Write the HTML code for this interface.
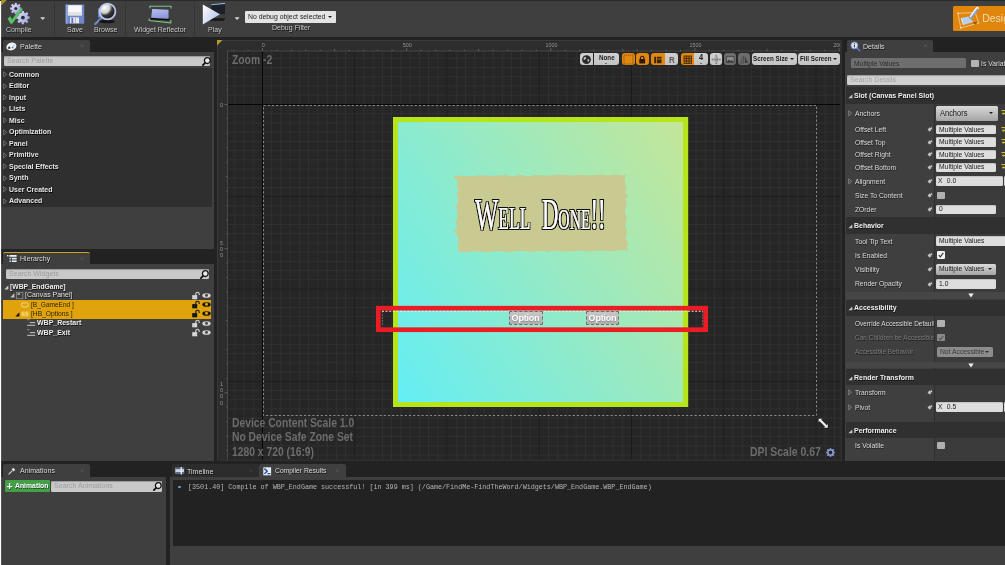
<!DOCTYPE html>
<html>
<head>
<meta charset="utf-8">
<title>WBP_EndGame</title>
<style>
html,body{margin:0;padding:0;}
body{width:1005px;height:565px;overflow:hidden;background:#222222;position:relative;font-family:"Liberation Sans",sans-serif;font-size:8px;color:#d8d8d8;}
.abs{position:absolute;}
.t{position:absolute;white-space:nowrap;line-height:10px;}
.b{font-weight:bold;}
.sh{text-shadow:0.5px 0.5px 0 #000;}
/* top toolbar */
#toolbar{left:1px;top:0;width:1004px;height:37px;background:#3f3f3f;}
.tsep{position:absolute;top:2px;height:33.500px;width:1px;background:#343434;}
.tlabel{position:absolute;top:24.800px;font-size:7.800px;line-height:10px;color:#cacaca;white-space:nowrap;text-shadow:0.600px 0.600px 0 #111;transform:scaleX(0.900);transform-origin:0 0;}
/* tabs */
.tab{position:absolute;height:13px;background:#3f3f3f;border-radius:2px 2px 0 0;}
.tab .lbl{position:absolute;top:2.4px;transform:scaleX(0.93);transform-origin:0 0;font-size:7.6px;line-height:10px;color:#dcdcdc;white-space:nowrap;text-shadow:0.5px 0.5px 0 #111;}
.tab .x{position:absolute;top:2px;font-size:7px;line-height:10px;color:#5a5a5a;}
.panel{position:absolute;background:#3f3f3f;}
.search{position:absolute;height:10px;background:#c9c9c9;border-radius:1.5px;box-shadow:inset 0 1px 1px #9a9a9a;}
.search span{position:absolute;left:3px;top:0.3px;transform:scaleX(0.93);transform-origin:0 0;font-size:7.6px;line-height:10px;color:#9c9c9c;white-space:nowrap;}
.pal{position:absolute;left:9px;transform:scaleX(0.92);transform-origin:0 0;margin-top:0.5px;font-size:7.6px;font-weight:bold;line-height:10px;color:#e6e6e6;white-space:nowrap;text-shadow:0.5px 0.5px 0 #000;}
.tri{position:absolute;left:3.5px;width:0;height:0;}
.optbtn{position:absolute;height:13.6px;box-sizing:border-box;border:0.8px dashed #6e6e6e;background:linear-gradient(#c6c6c6,#b0b0b0);color:#fff;font-weight:bold;font-size:9px;line-height:12px;text-align:center;letter-spacing:-0.2px;border-radius:1px;text-shadow:0 0.5px 1px rgba(0,0,0,0.25);}
.ovt{position:absolute;white-space:nowrap;font-weight:bold;font-size:12px;line-height:20px;color:#6c6c6c;transform:scaleX(0.86);transform-origin:0 0;}
.vb{position:absolute;top:12.500px;height:12.800px;overflow:hidden;}
.vb.lg{background:linear-gradient(#d0d0d0,#c4c4c4);}
.vb.or{background:#e0880f;}
.vb.dg{background:#6c6c6c;}
.vb.rl{border-top-left-radius:3px;border-bottom-left-radius:3px;}
.vb.rr{border-top-right-radius:3px;border-bottom-right-radius:3px;}
.vt{position:absolute;white-space:nowrap;font-weight:bold;font-size:8px;line-height:10px;color:#1c1c1c;transform:scaleX(0.780);transform-origin:0 0;}
.dn{position:absolute;width:0;height:0;border-left:1.300px solid transparent;border-right:1.300px solid transparent;border-top:1.600px solid #1c1c1c;}
.dn.big{border-left-width:2.200px;border-right-width:2.200px;border-top-width:2.600px;}
.ht{position:absolute;white-space:nowrap;font-size:7.600px;line-height:10px;transform:scaleX(0.920);transform-origin:0 0;text-shadow:0.500px 0.500px 0 #111;}
.dt{position:absolute;margin-top:0.800px;white-space:nowrap;font-size:7.500px;line-height:10px;color:#dcdcdc;transform:scaleX(0.900);transform-origin:0 0;text-shadow:0.500px 0.500px 0 #1a1a1a;}
.dh{position:absolute;margin-top:0.800px;white-space:nowrap;font-size:8px;font-weight:bold;line-height:10px;color:#f0f0f0;transform:scaleX(0.870);transform-origin:0 0;text-shadow:0.500px 0.500px 0 #111;}
.fld{position:absolute;background:#dedede;border-radius:1.500px;box-shadow:inset 0 0.600px 0.800px #a8a8a8;overflow:hidden;}
.ft{position:absolute;top:-0.200px;white-space:nowrap;font-size:7.500px;line-height:10px;color:#1a1a1a;transform:scaleX(0.900);transform-origin:0 0;}
.cb{position:absolute;width:8px;height:7.800px;border-radius:1px;}
.combo{position:absolute;background:linear-gradient(#dadada,#a4a4a4);border-radius:1.500px;overflow:hidden;}
</style>
</head>
<body>
<div id="root" style="position:absolute;left:0;top:0;width:1005px;height:565px;will-change:transform;">
<!-- TOOLBAR -->
<div id="toolbar" class="abs">
<div class="abs" style="left:0;top:0;width:1004px;height:1px;background:#2a2a2a"></div>
<div class="tsep" style="left:53px"></div><div class="tsep" style="left:124px"></div><div class="tsep" style="left:192.5px"></div>
<svg class="abs" style="left:-1px;top:0" width="345" height="37" viewBox="0 0 345 37">
<defs><linearGradient id="gg" x1="0" y1="0" x2="1" y2="1"><stop offset="0" stop-color="#dfe2fa"/><stop offset="1" stop-color="#9aa0d8"/></linearGradient><radialGradient id="lens" cx="0.3" cy="0.25" r="0.9"><stop offset="0" stop-color="#ffffff"/><stop offset="0.380" stop-color="#cfcfcf"/><stop offset="0.560" stop-color="#343434"/><stop offset="1" stop-color="#141414"/></radialGradient><linearGradient id="pl" x1="0" y1="0" x2="1" y2="0.600"><stop offset="0" stop-color="#ffffff"/><stop offset="1" stop-color="#b8c4e8"/></linearGradient><linearGradient id="wr" x1="0" y1="0" x2="0.300" y2="1"><stop offset="0" stop-color="#b8c0f0"/><stop offset="1" stop-color="#8c98d8"/></linearGradient></defs>
<path d="M1.200 0H6.800L1.200 5.600Z" fill="#b0902a"/>
<path d="M21.51 7.60L21.51 9.60L19.96 9.67L19.50 10.79L20.55 11.94L19.14 13.35L17.99 12.30L16.87 12.76L16.80 14.31L14.80 14.31L14.73 12.76L13.61 12.30L12.46 13.35L11.05 11.94L12.10 10.79L11.64 9.67L10.09 9.60L10.09 7.60L11.64 7.53L12.10 6.41L11.05 5.26L12.46 3.85L13.61 4.90L14.73 4.44L14.80 2.89L16.80 2.89L16.87 4.44L17.99 4.90L19.14 3.85L20.55 5.26L19.50 6.41L19.96 7.53Z" fill="url(#gg)"/><circle cx="15.8" cy="8.6" r="1.5" fill="#2c2c34"/><path d="M29.60 16.43L29.60 18.77L27.74 18.84L27.20 20.15L28.46 21.51L26.81 23.16L25.45 21.90L24.14 22.44L24.07 24.30L21.73 24.30L21.66 22.44L20.35 21.90L18.99 23.16L17.34 21.51L18.60 20.15L18.06 18.84L16.20 18.77L16.20 16.43L18.06 16.36L18.60 15.05L17.34 13.69L18.99 12.04L20.35 13.30L21.66 12.76L21.73 10.90L24.07 10.90L24.14 12.76L25.45 13.30L26.81 12.04L28.46 13.69L27.20 15.05L27.74 16.36Z" fill="url(#gg)"/><circle cx="22.9" cy="17.6" r="1.9" fill="#2c2c34"/>
<path d="M7.600 18.700L10.200 16.300L12 19.400L20.700 8.200L23 9.300L12.200 23.800L10.600 23.800Z" fill="#5cc466" stroke="#3c8a44" stroke-width="0.300"/>
<path d="M40.200 17.200H45.200L42.700 19.900Z" fill="#d8d8d8"/><path d="M234.600 17.200H239.600L237.100 19.900Z" fill="#d8d8d8"/>
<rect x="65.700" y="4.500" width="18.500" height="19.200" rx="0.600" fill="#6f88cc"/><rect x="65.700" y="4.500" width="1.600" height="19.200" fill="#93a6dc"/><rect x="67.900" y="5.200" width="13.900" height="10.200" fill="#f8f8f8"/><rect x="67.900" y="12" width="13.900" height="3.400" fill="#e4e4e4"/><rect x="70" y="17.400" width="9" height="5.800" fill="#e8e8e8"/><rect x="71.400" y="18" width="1.800" height="5" fill="#5a74c0"/><rect x="75" y="18" width="0.800" height="5.200" fill="#b0b0b0"/>
<path d="M98 8.500H104V17.500H98Z" fill="#6f88cc"/><path d="M101.200 18.200L95.200 24" stroke="#7088cc" stroke-width="2.200" stroke-linecap="round"/><ellipse cx="107" cy="21.500" rx="8" ry="1.800" fill="#151515"/><circle cx="107.500" cy="11.500" r="7.900" fill="url(#lens)" stroke="#b8c8ee" stroke-width="1.800"/>
<path d="M150.500 19.400L168.500 20.200L171 18.300L168 19L150.500 18Z" fill="#0a0a0a"/><path d="M151.200 17.800L152.200 9L168.500 9.800L168.500 18.800Z" fill="url(#wr)"/><path d="M152.200 9L166.500 9.800L168.500 9.800" fill="none"/><path d="M149.900 8.300V6.300H171V8.600" fill="none" stroke="#7cc48c" stroke-width="1.100"/><path d="M149.200 18.400V20.600L170.800 22.900V20" fill="none" stroke="#7cc48c" stroke-width="1.100"/>
<path d="M211.200 4.200L225 2.800V14.200L211.200 14.200Z" fill="#1c2028"/><path d="M211.200 4.200L225 2.800V3.900L211.200 5.300Z" fill="#8cb4d8"/><path d="M209.500 18.200H225.200L224 20.800H209.500Z" fill="#161616"/><path d="M202.800 4.600L220 14.200L202.800 24.400Z" fill="url(#pl)"/>
</svg>
<div class="tlabel" style="left:4.600px">Compile</div>
<div class="tlabel" style="left:66.400px">Save</div>
<div class="tlabel" style="left:92.600px">Browse</div>
<div class="tlabel" style="left:133px">Widget Reflector</div>
<div class="tlabel" style="left:207px">Play</div>
<div class="tlabel" style="left:271px;top:23px">Debug Filter</div>
<div class="abs" style="left:244px;top:10.500px;width:91.300px;height:12.200px;background:#e4e4e4;border-radius:1px"><span class="ft" style="left:3.400px;top:1.400px;font-size:7.800px;transform:scaleX(0.880)">No debug object selected</span><i class="dn big" style="left:82.500px;top:5.400px"></i></div>
<div class="abs" style="left:952px;top:6px;width:60px;height:25px;background:#e0860c;border-radius:1.500px"><svg class="abs" style="left:0;top:0" width="30" height="25" viewBox="953 6 30 25"><path d="M958 13.400L975.300 12.400L978.500 23L960.800 28Z" fill="none" stroke="#f2dcb4" stroke-width="0.700"/><path d="M957.200 12.800h1.600M958 12.400v1.600M977.700 23h1.600M960 28h1.600M960.800 27.200v1.600" stroke="#f8ead0" stroke-width="0.600"/><path d="M972 22.500L977.500 21.500L976 25Z" fill="#8a5208" opacity="0.800"/><path d="M960.800 18L968.300 16.600L973.600 21.900L963 25.100Z" fill="#b4d0ee"/><path d="M960.800 18L963 25.100L963.800 24.900L961.700 18.300Z" fill="#e8f2fc"/><path d="M975.900 7.600L978.600 9.200L972 18.400L969.500 18.800L969.600 16.400Z" fill="#7aa0e0"/><path d="M975.900 7.600L977.200 8.400L970.600 17.600L969.600 16.400Z" fill="#f4f8ff"/><path d="M975.900 7.600a1.500 1.500 0 0 1 2.700 1.600Z" fill="#ffffff"/></svg><span class="t" style="left:29.200px;top:5.400px;font-size:10.500px;line-height:14px;color:#f2dcb4">Designer</span></div>
</div>
<!-- LEFT: PALETTE -->
<div class="tab" style="left:3px;top:40px;width:87px;height:12px"><svg class="abs" style="left:3.400px;top:1.600px" width="11" height="9" viewBox="0 0 11 9"><path d="M0.400 5.600C0.400 2.600 3 0.400 6.200 0.400C8.800 0.400 10.400 1.800 10.400 3.800C10.400 6.400 7.800 8.400 4.400 8.400C1.800 8.400 0.400 7.400 0.400 5.600Z" fill="#f4f4f8"/><circle cx="3.200" cy="5.800" r="1.200" fill="#3f3f3f"/><circle cx="6.600" cy="5.600" r="1" fill="#4a90e0"/><circle cx="8.300" cy="3.600" r="0.800" fill="#90c0f0"/></svg><span class="lbl" style="left:17px;top:1.600px">Palette</span><span class="x" style="left:77px;top:1px">×</span></div>
<div class="panel" style="left:1.300px;top:52px;width:212.400px;height:196.700px"></div>
<div class="abs" style="left:1.300px;top:67.800px;width:210.700px;height:138.900px;background:#2f2f2f"></div>
<div class="search" style="left:4.400px;top:56px;width:206.100px"><span>Search Palette</span></div>

<svg class="abs" style="left:3px;top:71.0px" width="5" height="7" viewBox="0 0 5 7"><path d="M0.700 0.800L3.600 3.300L0.700 5.800Z" fill="none" stroke="#8a8a8a" stroke-width="0.700"/></svg><div class="pal" style="top:69.0px">Common</div>
<svg class="abs" style="left:3px;top:82.5px" width="5" height="7" viewBox="0 0 5 7"><path d="M0.700 0.800L3.600 3.300L0.700 5.800Z" fill="none" stroke="#8a8a8a" stroke-width="0.700"/></svg><div class="pal" style="top:80.5px">Editor</div>
<svg class="abs" style="left:3px;top:94.0px" width="5" height="7" viewBox="0 0 5 7"><path d="M0.700 0.800L3.600 3.300L0.700 5.800Z" fill="none" stroke="#8a8a8a" stroke-width="0.700"/></svg><div class="pal" style="top:92.0px">Input</div>
<svg class="abs" style="left:3px;top:105.6px" width="5" height="7" viewBox="0 0 5 7"><path d="M0.700 0.800L3.600 3.300L0.700 5.800Z" fill="none" stroke="#8a8a8a" stroke-width="0.700"/></svg><div class="pal" style="top:103.6px">Lists</div>
<svg class="abs" style="left:3px;top:117.1px" width="5" height="7" viewBox="0 0 5 7"><path d="M0.700 0.800L3.600 3.300L0.700 5.800Z" fill="none" stroke="#8a8a8a" stroke-width="0.700"/></svg><div class="pal" style="top:115.1px">Misc</div>
<svg class="abs" style="left:3px;top:128.6px" width="5" height="7" viewBox="0 0 5 7"><path d="M0.700 0.800L3.600 3.300L0.700 5.800Z" fill="none" stroke="#8a8a8a" stroke-width="0.700"/></svg><div class="pal" style="top:126.6px">Optimization</div>
<svg class="abs" style="left:3px;top:140.1px" width="5" height="7" viewBox="0 0 5 7"><path d="M0.700 0.800L3.600 3.300L0.700 5.800Z" fill="none" stroke="#8a8a8a" stroke-width="0.700"/></svg><div class="pal" style="top:138.1px">Panel</div>
<svg class="abs" style="left:3px;top:151.6px" width="5" height="7" viewBox="0 0 5 7"><path d="M0.700 0.800L3.600 3.300L0.700 5.800Z" fill="none" stroke="#8a8a8a" stroke-width="0.700"/></svg><div class="pal" style="top:149.6px">Primitive</div>
<svg class="abs" style="left:3px;top:163.2px" width="5" height="7" viewBox="0 0 5 7"><path d="M0.700 0.800L3.600 3.300L0.700 5.800Z" fill="none" stroke="#8a8a8a" stroke-width="0.700"/></svg><div class="pal" style="top:161.2px">Special Effects</div>
<svg class="abs" style="left:3px;top:174.7px" width="5" height="7" viewBox="0 0 5 7"><path d="M0.700 0.800L3.600 3.300L0.700 5.800Z" fill="none" stroke="#8a8a8a" stroke-width="0.700"/></svg><div class="pal" style="top:172.7px">Synth</div>
<svg class="abs" style="left:3px;top:186.2px" width="5" height="7" viewBox="0 0 5 7"><path d="M0.700 0.800L3.600 3.300L0.700 5.800Z" fill="none" stroke="#8a8a8a" stroke-width="0.700"/></svg><div class="pal" style="top:184.2px">User Created</div>
<svg class="abs" style="left:3px;top:197.7px" width="5" height="7" viewBox="0 0 5 7"><path d="M0.700 0.800L3.600 3.300L0.700 5.800Z" fill="none" stroke="#8a8a8a" stroke-width="0.700"/></svg><div class="pal" style="top:195.7px">Advanced</div>

<!-- LEFT: HIERARCHY -->
<div class="tab" style="left:3px;top:251.700px;width:87px;height:12.300px;border-top:0.900px solid #c9a227;box-sizing:border-box"><svg class="abs" style="left:3.500px;top:2px" width="10" height="8" viewBox="0 0 10 8"><rect x="0" y="0" width="1.400" height="1.400" fill="#e8eef4"/><rect x="2.400" y="0" width="7.200" height="1.800" fill="#e8eef4"/><rect x="2.400" y="2.800" width="1.600" height="1.600" fill="#a8c8d8"/><rect x="4.800" y="2.800" width="4.800" height="1.600" fill="#e8eef4"/><rect x="2.400" y="5.400" width="1.600" height="1.600" fill="#a8c8d8"/><rect x="4.800" y="5.400" width="4.800" height="1.600" fill="#e8eef4"/></svg><span class="lbl" style="left:17px;top:1.500px">Hierarchy</span><span class="x" style="left:77px;top:1px">×</span></div>
<div class="panel" style="left:1.300px;top:264px;width:212.400px;height:196.800px"></div>
<div class="search" style="left:5.700px;top:269.200px;width:203.600px"><span>Search Widgets</span></div>
<div class="abs" style="left:3px;top:300.200px;width:208.300px;height:18.600px;background:#e0a30c"></div>
<svg class="abs" style="left:4px;top:284.7px" width="5" height="5" viewBox="0 0 5 5"><path d="M4.400 0.300V4.400H0.300Z" fill="#c8c8c8"/></svg><div class="ht b" style="left:10px;top:281.800px;color:#f0f0f0;transform:scaleX(0.890)">[WBP_EndGame]</div>
<svg class="abs" style="left:9.5px;top:293.3px" width="5" height="5" viewBox="0 0 5 5"><path d="M4.400 0.300V4.400H0.300Z" fill="#c8c8c8"/></svg><svg class="abs" style="left:15.800px;top:292px" width="8" height="8" viewBox="0 0 8 8"><rect x="0.500" y="0.500" width="6.400" height="6.200" fill="none" stroke="#8c8c8c" stroke-width="0.800"/><rect x="1.600" y="1.400" width="2.400" height="1.400" fill="#b8c8e0"/></svg><div class="ht" style="left:25px;top:290.400px;color:#e0e0e0">[Canvas Panel]</div>
<svg class="abs" style="left:21.300px;top:301.800px" width="8" height="6" viewBox="0 0 8 6"><rect x="0.600" y="0.800" width="6.600" height="4.200" rx="1.400" fill="none" stroke="#f4dc9a" stroke-width="0.900"/></svg><div class="ht" style="left:31.300px;top:299.500px;color:#2c2208;text-shadow:none;transform:scaleX(0.860)">[B_GameEnd ]</div>
<svg class="abs" style="left:15.2px;top:311.6px" width="5" height="5" viewBox="0 0 5 5"><path d="M4.400 0.300V4.400H0.300Z" fill="#141414"/></svg><svg class="abs" style="left:21.300px;top:310.800px" width="8" height="6" viewBox="0 0 8 6"><rect x="0.400" y="0.600" width="3.300" height="4.800" fill="#f0c860"/><rect x="4.200" y="0.600" width="3.300" height="4.800" fill="#f0c860"/></svg><div class="ht" style="left:31.300px;top:308.700px;color:#2c2208;text-shadow:none;transform:scaleX(0.880)">[HB_Options ]</div>
<svg class="abs" style="left:26.800px;top:319.3px" width="9" height="8" viewBox="0 0 9 8"><rect x="0.200" y="0.300" width="2.400" height="0.900" fill="#9a9a9a"/><rect x="2.800" y="3.200" width="5.400" height="0.900" fill="#d8d8d8"/><rect x="0.200" y="5.800" width="8" height="0.900" fill="#d8d8d8"/></svg><div class="ht b" style="left:37px;top:318.3px;color:#f0f0f0">WBP_Restart</div>
<svg class="abs" style="left:26.800px;top:328.5px" width="9" height="8" viewBox="0 0 9 8"><rect x="0.200" y="0.300" width="2.400" height="0.900" fill="#9a9a9a"/><rect x="2.800" y="3.200" width="5.400" height="0.900" fill="#d8d8d8"/><rect x="0.200" y="5.800" width="8" height="0.900" fill="#d8d8d8"/></svg><div class="ht b" style="left:37px;top:327.5px;color:#f0f0f0">WBP_Exit</div>
<svg class="abs" style="left:191.500px;top:291.1px" width="9" height="9" viewBox="0 0 9 9"><rect x="0.200" y="4.100" width="5" height="4.200" fill="#d4d4d4"/><path d="M3.800 4.500V2.900a1.700 1.700 0 0 1 3.400 0V4.100" fill="none" stroke="#d4d4d4" stroke-width="1.100"/></svg><svg class="abs" style="left:201.500px;top:292.1px" width="9" height="7" viewBox="0 0 9 7"><ellipse cx="4.500" cy="3.500" rx="4.200" ry="2.300" fill="#d4d4d4"/><circle cx="4.500" cy="3.300" r="1.500" fill="#4a4a4a"/></svg>
<svg class="abs" style="left:191.500px;top:300.2px" width="9" height="9" viewBox="0 0 9 9"><rect x="0.200" y="4.100" width="5" height="4.200" fill="#161616"/><path d="M3.800 4.500V2.900a1.700 1.700 0 0 1 3.400 0V4.100" fill="none" stroke="#161616" stroke-width="1.100"/></svg><svg class="abs" style="left:201.500px;top:301.2px" width="9" height="7" viewBox="0 0 9 7"><ellipse cx="4.500" cy="3.500" rx="4.200" ry="2.300" fill="#161616"/><circle cx="4.500" cy="3.300" r="1.500" fill="#e0a30c"/></svg>
<svg class="abs" style="left:191.500px;top:309.4px" width="9" height="9" viewBox="0 0 9 9"><rect x="0.200" y="4.100" width="5" height="4.200" fill="#161616"/><path d="M3.800 4.500V2.900a1.700 1.700 0 0 1 3.400 0V4.100" fill="none" stroke="#161616" stroke-width="1.100"/></svg><svg class="abs" style="left:201.500px;top:310.4px" width="9" height="7" viewBox="0 0 9 7"><ellipse cx="4.500" cy="3.500" rx="4.200" ry="2.300" fill="#161616"/><circle cx="4.500" cy="3.300" r="1.500" fill="#e0a30c"/></svg>
<svg class="abs" style="left:191.500px;top:318.6px" width="9" height="9" viewBox="0 0 9 9"><rect x="0.200" y="4.100" width="5" height="4.200" fill="#d4d4d4"/><path d="M3.800 4.500V2.900a1.700 1.700 0 0 1 3.400 0V4.100" fill="none" stroke="#d4d4d4" stroke-width="1.100"/></svg><svg class="abs" style="left:201.500px;top:319.6px" width="9" height="7" viewBox="0 0 9 7"><ellipse cx="4.500" cy="3.500" rx="4.200" ry="2.300" fill="#d4d4d4"/><circle cx="4.500" cy="3.300" r="1.500" fill="#4a4a4a"/></svg>
<svg class="abs" style="left:191.500px;top:327.8px" width="9" height="9" viewBox="0 0 9 9"><rect x="0.200" y="4.100" width="5" height="4.200" fill="#d4d4d4"/><path d="M3.800 4.500V2.900a1.700 1.700 0 0 1 3.400 0V4.100" fill="none" stroke="#d4d4d4" stroke-width="1.100"/></svg><svg class="abs" style="left:201.500px;top:328.8px" width="9" height="7" viewBox="0 0 9 7"><ellipse cx="4.500" cy="3.500" rx="4.200" ry="2.300" fill="#d4d4d4"/><circle cx="4.500" cy="3.300" r="1.500" fill="#4a4a4a"/></svg>
<svg class="abs" style="left:200.2px;top:269.7px" width="9" height="9" viewBox="0 0 9 9"><circle cx="5.300" cy="3.600" r="2.900" fill="#e6e6e6" stroke="#111" stroke-width="1.300"/><path d="M3.100 5.900L0.900 8.100" stroke="#111" stroke-width="1.800" stroke-linecap="round"/></svg><svg class="abs" style="left:201.8px;top:56.5px" width="9" height="9" viewBox="0 0 9 9"><circle cx="5.300" cy="3.600" r="2.900" fill="#e6e6e6" stroke="#111" stroke-width="1.300"/><path d="M3.100 5.900L0.900 8.100" stroke="#111" stroke-width="1.800" stroke-linecap="round"/></svg>

<!-- DESIGNER -->
<div id="designer" class="abs" style="left:217px;top:40px;width:625px;height:420.800px;background:#2d2d2d;overflow:hidden">
<svg class="abs" style="left:0;top:0" width="625" height="421" viewBox="0 0 625 421">
<defs>
<pattern id="gmin" x="45" y="64" width="9.226" height="9.226" patternUnits="userSpaceOnUse"><path d="M0.5 0V9.226M0 0.5H9.226" stroke="#303030" stroke-width="1" fill="none"/></pattern>
<pattern id="gmaj" x="45" y="64" width="92.256" height="92.256" patternUnits="userSpaceOnUse"><path d="M0.5 0V92.256M0 0.5H92.256" stroke="#1a1a1a" stroke-width="1" fill="none"/></pattern>
</defs>
<rect x="0" y="0" width="626" height="1" fill="#3a3a3a"/>
<rect x="0" y="0" width="1" height="422" fill="#3a3a3a"/>
<rect x="10" y="10.500" width="616" height="412" fill="#262626"/>
<rect x="10" y="10.500" width="616" height="412" fill="url(#gmin)"/>
<rect x="10" y="10.500" width="616" height="412" fill="url(#gmaj)"/>
<path d="M45.500 10.500V422M10 64.500H626" stroke="#060606" stroke-width="1"/>
<path d="M10 11H626M10.500 10.500V422" stroke="#484848" stroke-width="1" fill="none"/>
<path d="M16.7 9.7V11M31.1 9.7V11M45.5 8.0V11M59.9 9.7V11M74.3 9.7V11M88.7 9.7V11M103.2 9.7V11M117.6 8.8V11M132.0 9.7V11M146.4 9.7V11M160.8 9.7V11M175.2 9.7V11M189.7 8.0V11M204.1 9.7V11M218.5 9.7V11M232.9 9.7V11M247.3 9.7V11M261.7 8.8V11M276.1 9.7V11M290.6 9.7V11M305.0 9.7V11M319.4 9.7V11M333.8 8.0V11M348.2 9.7V11M362.6 9.7V11M377.0 9.7V11M391.5 9.7V11M405.9 8.8V11M420.3 9.7V11M434.7 9.7V11M449.1 9.7V11M463.5 9.7V11M477.9 8.0V11M492.4 9.7V11M506.8 9.7V11M521.2 9.7V11M535.6 9.7V11M550.0 8.8V11M564.4 9.7V11M578.9 9.7V11M593.3 9.7V11M607.7 9.7V11M622.1 8.0V11M9.4 21.3H10.500M9.4 35.7H10.500M9.4 50.1H10.500M7.5 64.5H10.500M9.4 78.9H10.500M9.4 93.3H10.500M9.4 107.7H10.500M9.4 122.2H10.500M8.7 136.6H10.500M9.4 151.0H10.500M9.4 165.4H10.500M9.4 179.8H10.500M9.4 194.2H10.500M7.5 208.7H10.500M9.4 223.1H10.500M9.4 237.5H10.500M9.4 251.9H10.500M9.4 266.3H10.500M8.7 280.7H10.500M9.4 295.1H10.500M9.4 309.6H10.500M9.4 324.0H10.500M9.4 338.4H10.500M7.5 352.8H10.500M9.4 367.2H10.500M9.4 381.6H10.500M9.4 396.0H10.500M9.4 410.5H10.500" stroke="#6a6a6a" stroke-width="0.800" fill="none"/>
<g font-family="Liberation Sans, sans-serif" font-size="5.400" fill="#949494"><text x="46.2" y="6.600" text-anchor="middle">0</text><text x="190.3" y="6.600" text-anchor="middle">500</text><text x="334.5" y="6.600" text-anchor="middle">1000</text><text x="478.6" y="6.600" text-anchor="middle">1500</text><text x="622.300" y="6.600" text-anchor="middle">2000</text><text x="4.6" y="66.9" text-anchor="middle">0</text><text x="4.6" y="204.9" text-anchor="middle">5</text><text x="4.6" y="211.1" text-anchor="middle">0</text><text x="4.6" y="217.2" text-anchor="middle">0</text><text x="4.6" y="345.9" text-anchor="middle">1</text><text x="4.6" y="352.1" text-anchor="middle">0</text><text x="4.6" y="358.3" text-anchor="middle">0</text><text x="4.6" y="364.5" text-anchor="middle">0</text></g>
<path d="M0 0H5.600L0 5.600Z" fill="#b89a28"/>
<rect x="46.500" y="65.500" width="553" height="310" fill="none" stroke="#a4a4a4" stroke-width="0.800" stroke-dasharray="2.200 2"/>
<rect x="623.300" y="0" width="2" height="422" fill="#303030"/><rect x="0" y="419.600" width="626" height="2" fill="#303030"/>
</svg>
<svg class="abs" style="left:0;top:0" width="625" height="421" viewBox="217 40 625 421">
<defs>
<linearGradient id="bgg" x1="0" y1="1" x2="1.173" y2="0.281"><stop offset="0" stop-color="#64eef4"/><stop offset="1" stop-color="#c4e698"/></linearGradient>
<filter id="outl" x="-5%" y="-10%" width="110%" height="125%"><feMorphology in="SourceAlpha" operator="dilate" radius="0.9" result="d"/><feFlood flood-color="#101010"/><feComposite in2="d" operator="in" result="o"/><feMerge><feMergeNode in="o"/><feMergeNode in="SourceGraphic"/></feMerge></filter>
</defs>
<rect x="393" y="117" width="295.2" height="290" fill="#b6e61a"/>
<rect x="398" y="122" width="285" height="280" fill="url(#bgg)"/>
<path d="M453 176.5 L460 175.6 L470 176.2 L480 175.2 L492 176 L503 175 L512 176.2 L521 174.8 L528 176.4 L536 175 L548 175.8 L560 174.6 L571 175.6 L580 174.8 L590 175.4 L600 174.4 L608 175.6 L615 174.6 L622 175.4 L625.5 174.6 L624.5 181 L626.5 188 L625 192 L628.2 196 L625.4 199 L626.6 204 L624.6 211 L626.8 218 L625 226 L627 232 L625.6 238 L628.4 244 L626.4 246.5 L628.2 250.6 L620 250 L611 251.4 L600 250.4 L588 251.6 L577 250.6 L566 251.8 L553 250.6 L549 252.2 L545 250.8 L532 251.8 L520 250.8 L508 252 L497 251 L486 252.2 L474 251.2 L464 252.4 L458.5 251.6 L457.6 246 L458.6 240 L456.8 234 L453.4 231.6 L457.2 229 L456 222 L457.8 214 L456.2 206 L458.4 199 L456.6 194 L459 190 L456.4 186 L458 181 Z" fill="#c8ca92"/>
<g filter="url(#outl)" font-family="Liberation Serif, serif" font-weight="normal" font-size="44" font-variant="small-caps" fill="#ffffff"><text transform="translate(475 229) scale(0.53 1)" x="0" y="0" textLength="104.5" lengthAdjust="spacingAndGlyphs">Well</text><text transform="translate(542 229) scale(0.5 1)" x="0" y="0" textLength="127.2" lengthAdjust="spacingAndGlyphs">Done!!</text></g>
</svg>
<!-- selection / options -->
<svg class="abs" style="left:0;top:0" width="625" height="421" viewBox="217 40 625 421"><rect x="378.350" y="308.200" width="327.300" height="21.500" fill="none" stroke="#ec1c24" stroke-width="4.700"/><path d="M382 311.300H703" stroke="#f0f0f0" stroke-width="0.900" stroke-dasharray="2 1.600" fill="none"/><path d="M382.4 311.2V325.5M702.6 311.2V325.5" stroke="#e8e8e8" stroke-width="0.7" stroke-dasharray="1.5 1.5" fill="none" opacity="0.6"/></svg>
<div class="optbtn" style="left:291.5px;top:271.4px;width:34px">Option</div>
<div class="optbtn" style="left:369px;top:271.4px;width:33px">Option</div>
<!-- overlay texts -->
<div class="ovt" style="left:15px;top:10px">Zoom -2</div>
<div class="ovt" style="left:15px;top:373px">Device Content Scale 1.0</div>
<div class="ovt" style="left:15px;top:387.3px">No Device Safe Zone Set</div>
<div class="ovt" style="left:15px;top:401.6px">1280 x 720 (16:9)</div>
<div class="ovt" style="left:533px;top:401.600px;transform:scaleX(0.870)">DPI Scale 0.67</div>
<!-- viewport toolbar -->
<div class="vb lg rl" style="left:362.6px;width:13.6px;"><svg width="13" height="13" viewBox="0 0 13 13" style="position:absolute;left:0;top:0"><circle cx="6.500" cy="6.600" r="4.400" fill="#2a2a2a"/><path d="M4.2 4.4c.8-.5 1.6-.3 2 .3.3.6-.3 1-.9 1.2-.5.3-.3.9-.9 1-.6 0-.9-.6-.8-1.3.1-.5.3-.9.6-1.200ZM7.600 6.2c.7-.2 1.500 0 1.700.6.100.7-.3 1.600-1 2-.6.200-.8-.4-.7-1 .1-.5-.4-1.100 0-1.600Z" fill="#c8c8c8"/></svg></div>
<div class="vb lg rr" style="left:376.8px;width:25.6px;"><span class="vt" style="left:5.2px;top:0.5px">None</span><i class="dn" style="left:11.2px;top:10.2px"></i></div>
<div class="vb or rl rr" style="left:405.0px;width:13.0px;"><svg width="13" height="13" viewBox="0 0 13 13" style="position:absolute;left:0;top:0"><rect x="2" y="2.100" width="9" height="9" fill="none" stroke="#8a560c" stroke-width="0.900" stroke-dasharray="1.300 0.700"/></svg></div>
<div class="vb or rl rr" style="left:419.2px;width:12.4px;"><svg width="12.4" height="13" viewBox="0 0 12.4 13" style="position:absolute;left:0;top:0"><path d="M4.400 6.200V5.100a1.800 1.800 0 0 1 3.600 0V6.200" fill="none" stroke="#2a1a04" stroke-width="1.100"/><rect x="3.300" y="6.100" width="5.800" height="4.300" rx="0.500" fill="#2a1a04"/></svg></div>
<div class="vb or rl" style="left:434.3px;width:13.3px;"><svg width="13.3" height="13" viewBox="0 0 13.3 13" style="position:absolute;left:0;top:0"><rect x="3.200" y="3.800" width="1.900" height="6.400" fill="#3a2406"/><rect x="5.900" y="3.800" width="4.600" height="1.800" fill="#3a2406"/><rect x="5.900" y="6.400" width="4.600" height="3.800" fill="#3a2406"/></svg></div>
<div class="vb lg rr" style="left:447.6px;width:13.4px;"><span class="vt" style="left:4.400px;top:2px;font-size:9px;color:#585858;transform:scaleX(0.900)">R</span></div>
<div class="vb or rl" style="left:463.8px;width:13.2px;"><svg width="13.2" height="13" viewBox="0 0 13.200 13" style="position:absolute;left:0;top:0"><rect x="3" y="3" width="7.400" height="7.400" fill="#b86c0c" stroke="#3a2406" stroke-width="0.800"/><path d="M5.500 3V10.400M8 3V10.400M3 5.500H10.400M3 8H10.400" stroke="#3a2406" stroke-width="0.700"/></svg></div>
<div class="vb lg rr" style="left:477.0px;width:13.9px;"><span class="vt" style="left:4.900px;top:0.200px;font-size:8.200px;transform:scaleX(0.900)">4</span><i class="dn" style="left:5.600px;top:10.200px"></i></div>
<div class="vb lg rl rr" style="left:492.9px;width:12.5px;"><svg width="12.5" height="13" viewBox="0 0 12.500 13" style="position:absolute;left:0;top:0"><path d="M6.250 2.200V10.900M1.900 6.550H10.600" stroke="#777" stroke-width="0.700"/><path d="M6.250 1.700l1.200 1.500h-2.400ZM6.250 11.400l1.200-1.500h-2.400ZM1.400 6.550l1.500-1.200v2.400ZM11.100 6.550l-1.500-1.200v2.400Z" fill="#777"/><rect x="4.600" y="4.300" width="0.700" height="4.500" fill="#777"/><rect x="7.200" y="4.300" width="0.700" height="4.500" fill="#777"/></svg></div>
<div class="vb dg rl rr" style="left:506.8px;width:12.2px;"><svg width="12.2" height="13" viewBox="0 0 12.200 13" style="position:absolute;left:0;top:0"><rect x="2.300" y="3.700" width="7.800" height="5.800" fill="#8c8c8c" stroke="#3c3c3c" stroke-width="0.800"/><path d="M2.700 9.100l2.100-2.600 1.600 1.500 1.300-1 2 2.100Z" fill="#3c3c3c"/></svg></div>
<div class="vb dg rl rr" style="left:520.6px;width:12.6px;"><svg width="12.6" height="13" viewBox="0 0 12.600 13" style="position:absolute;left:0;top:0"><path d="M5.600 3.300V10H2.500Z" fill="none" stroke="#444" stroke-width="0.700"/><path d="M6.900 3.300V10H10.200Z" fill="#3e3e3e"/></svg></div>
<div class="vb lg rl rr" style="left:534.7px;width:45.1px;"><span class="vt" style="left:1.400px;top:1.500px">Screen Size</span><i class="dn big" style="left:38px;top:5.600px"></i></div>
<div class="vb lg rl rr" style="left:581.2px;width:41.8px;"><span class="vt" style="left:2.200px;top:1.600px">Fill Screen</span><i class="dn big" style="left:35px;top:5.600px"></i></div>
<svg class="abs" style="left:600.500px;top:378px" width="11" height="11" viewBox="0 0 11 11"><path d="M0.400 0.400H4.800L3.500 1.700L8.700 6.900L10 5.600V10H5.600L6.900 8.700L1.700 3.500L0.400 4.800Z" fill="#f6f6f6" stroke="#161616" stroke-width="0.500"/></svg>
<svg class="abs" style="left:608.400px;top:406.900px" width="11" height="11" viewBox="-6 -6 12 12"><g fill="#8fa6e0"><circle r="3.500"/><rect x="-0.900" y="-4.700" width="1.800" height="9.400" rx="0.300" transform="rotate(0)"/><rect x="-0.900" y="-4.700" width="1.800" height="9.400" rx="0.300" transform="rotate(45)"/><rect x="-0.900" y="-4.700" width="1.800" height="9.400" rx="0.300" transform="rotate(90)"/><rect x="-0.900" y="-4.700" width="1.800" height="9.400" rx="0.300" transform="rotate(135)"/></g><circle r="2.100" fill="#262626"/></svg>

</div>

<!-- DETAILS -->
<div class="tab" style="left:847.400px;top:40px;width:86px;height:12px"><svg class="abs" style="left:2.600px;top:1px" width="11" height="11" viewBox="0 0 11 11"><path d="M6.300 6.300L9.600 9.600" stroke="#5a78c8" stroke-width="1.600" stroke-linecap="round"/><circle cx="4.400" cy="4.400" r="3.500" fill="#dfe6f2" stroke="#6a86c8" stroke-width="0.900"/><rect x="3.900" y="3.600" width="1" height="2.800" fill="#333"/><rect x="3.900" y="2.200" width="1" height="0.900" fill="#333"/></svg><span class="lbl" style="left:15.500px;top:1.600px">Details</span><span class="x" style="left:76px;top:1px">×</span></div>
<div id="details" class="abs" style="left:845px;top:52px;width:160px;height:408.800px;background:#3f3f3f;overflow:hidden">
<div class="abs" style="left:89px;top:35px;width:71px;height:373px;background:#3b3b3b"></div>
<div class="abs" style="left:6.2px;top:6.2px;width:115.200px;height:10.300px;background:#6e6e6e;border-radius:1.500px"><span class="dt" style="left:3px;top:0.400px;color:#2e2e2e;text-shadow:none">Multiple Values</span></div>
<div class="cb" style="left:125.6px;top:7.7px;background:#b4b4b4"></div><span class="dt" style="left:136.0px;top:6.6px">Is Variable</span>
<div class="search" style="left:2.0px;top:23.0px;width:170px;background:#d0d0d0"><span style="color:#a4a4a4">Search Details</span></div>
<div class="abs" style="left:1.2px;top:35.0px;width:160px;height:16.6px;background:#303030"></div><svg class="abs" style="left:3.2px;top:41.7px" width="5" height="5" viewBox="0 0 5 5"><path d="M4.300 0.400V4.300H0.400Z" fill="#c8c8c8"/></svg><span class="dh" style="left:9.0px;top:37.9px">Slot (Canvas Panel Slot)</span>
<div class="abs" style="left:1.2px;top:165.3px;width:160px;height:16.4px;background:#303030"></div><svg class="abs" style="left:3.2px;top:171.9px" width="5" height="5" viewBox="0 0 5 5"><path d="M4.300 0.400V4.300H0.400Z" fill="#c8c8c8"/></svg><span class="dh" style="left:9.0px;top:168.1px">Behavior</span>
<div class="abs" style="left:1.2px;top:247.6px;width:160px;height:16.4px;background:#303030"></div><svg class="abs" style="left:3.2px;top:254.2px" width="5" height="5" viewBox="0 0 5 5"><path d="M4.300 0.400V4.300H0.400Z" fill="#c8c8c8"/></svg><span class="dh" style="left:9.0px;top:250.4px">Accessibility</span>
<div class="abs" style="left:1.2px;top:317.4px;width:160px;height:16.0px;background:#303030"></div><svg class="abs" style="left:3.2px;top:323.8px" width="5" height="5" viewBox="0 0 5 5"><path d="M4.300 0.400V4.300H0.400Z" fill="#c8c8c8"/></svg><span class="dh" style="left:9.0px;top:320.0px">Render Transform</span>
<div class="abs" style="left:1.2px;top:370.2px;width:160px;height:16.2px;background:#303030"></div><svg class="abs" style="left:3.2px;top:376.7px" width="5" height="5" viewBox="0 0 5 5"><path d="M4.300 0.400V4.300H0.400Z" fill="#c8c8c8"/></svg><span class="dh" style="left:9.0px;top:372.9px">Performance</span>
<div class="abs" style="left:88.6px;top:35px;width:1px;height:373px;background:#2e2e2e"></div>
<svg class="abs" style="left:3.4px;top:57.9px" width="5" height="7" viewBox="0 0 5 7"><path d="M0.700 0.800L3.600 3.300L0.700 5.800Z" fill="none" stroke="#9a9a9a" stroke-width="0.700"/></svg><span class="dt" style="left:10.0px;top:56.0px;color:#dcdcdc">Anchors</span><div class="combo" style="left:91.0px;top:53.8px;width:62px;height:15.200px"><span class="ft" style="left:4px;top:2.600px;font-size:8.300px">Anchors</span><i class="dn big" style="left:52.800px;top:6.600px"></i></div><svg class="abs" style="left:155.700px;top:57.3px" width="6" height="6" viewBox="0 0 6 6"><path d="M0.400 1.600H4.400V4.600H2.200" fill="none" stroke="#d8cc28" stroke-width="1"/><path d="M2.600 3.200L0.800 4.600L2.600 6Z" fill="#d8cc28"/></svg>
<span class="dt" style="left:10.0px;top:72.2px;color:#dcdcdc">Offset Left</span><svg class="abs" style="left:81.6px;top:74.0px" width="6" height="6" viewBox="0 0 6 6"><path d="M0.600 3.400L2.800 1.300L3.800 2.200L4.800 0.500L5.300 3.200L3.600 3.200L4.300 4.200L2.400 5.400Z" fill="#c4c4c4"/></svg><div class="fld" style="left:91.0px;top:72.7px;width:60.3px;height:9.4px"><span class="ft" style="left:2.6px">Multiple Values</span></div><svg class="abs" style="left:155.700px;top:73.5px" width="6" height="6" viewBox="0 0 6 6"><path d="M0.400 1.600H4.400V4.600H2.200" fill="none" stroke="#d8cc28" stroke-width="1"/><path d="M2.600 3.200L0.800 4.600L2.600 6Z" fill="#d8cc28"/></svg>
<span class="dt" style="left:10.0px;top:84.8px;color:#dcdcdc">Offset Top</span><svg class="abs" style="left:81.6px;top:86.6px" width="6" height="6" viewBox="0 0 6 6"><path d="M0.600 3.400L2.800 1.300L3.800 2.200L4.800 0.500L5.300 3.200L3.600 3.200L4.300 4.200L2.400 5.400Z" fill="#c4c4c4"/></svg><div class="fld" style="left:91.0px;top:85.3px;width:60.3px;height:9.4px"><span class="ft" style="left:2.6px">Multiple Values</span></div><svg class="abs" style="left:155.700px;top:86.1px" width="6" height="6" viewBox="0 0 6 6"><path d="M0.400 1.600H4.400V4.600H2.200" fill="none" stroke="#d8cc28" stroke-width="1"/><path d="M2.600 3.200L0.800 4.600L2.600 6Z" fill="#d8cc28"/></svg>
<span class="dt" style="left:10.0px;top:97.4px;color:#dcdcdc">Offset Right</span><svg class="abs" style="left:81.6px;top:99.2px" width="6" height="6" viewBox="0 0 6 6"><path d="M0.600 3.400L2.800 1.300L3.800 2.200L4.800 0.500L5.300 3.200L3.600 3.200L4.300 4.200L2.400 5.400Z" fill="#c4c4c4"/></svg><div class="fld" style="left:91.0px;top:97.9px;width:60.3px;height:9.4px"><span class="ft" style="left:2.6px">Multiple Values</span></div><svg class="abs" style="left:155.700px;top:98.7px" width="6" height="6" viewBox="0 0 6 6"><path d="M0.400 1.600H4.400V4.600H2.200" fill="none" stroke="#d8cc28" stroke-width="1"/><path d="M2.600 3.200L0.800 4.600L2.600 6Z" fill="#d8cc28"/></svg>
<span class="dt" style="left:10.0px;top:110.1px;color:#dcdcdc">Offset Bottom</span><svg class="abs" style="left:81.6px;top:111.9px" width="6" height="6" viewBox="0 0 6 6"><path d="M0.600 3.400L2.800 1.300L3.800 2.200L4.800 0.500L5.300 3.200L3.600 3.200L4.300 4.200L2.400 5.400Z" fill="#c4c4c4"/></svg><div class="fld" style="left:91.0px;top:110.6px;width:60.3px;height:9.4px"><span class="ft" style="left:2.6px">Multiple Values</span></div><svg class="abs" style="left:155.700px;top:111.4px" width="6" height="6" viewBox="0 0 6 6"><path d="M0.400 1.600H4.400V4.600H2.200" fill="none" stroke="#d8cc28" stroke-width="1"/><path d="M2.600 3.200L0.800 4.600L2.600 6Z" fill="#d8cc28"/></svg>
<svg class="abs" style="left:3.4px;top:125.8px" width="5" height="7" viewBox="0 0 5 7"><path d="M0.700 0.800L3.600 3.300L0.700 5.800Z" fill="none" stroke="#9a9a9a" stroke-width="0.700"/></svg><span class="dt" style="left:10.0px;top:123.9px;color:#dcdcdc">Alignment</span><svg class="abs" style="left:81.6px;top:125.7px" width="6" height="6" viewBox="0 0 6 6"><path d="M0.600 3.400L2.800 1.300L3.800 2.200L4.800 0.500L5.300 3.200L3.600 3.200L4.300 4.200L2.400 5.400Z" fill="#c4c4c4"/></svg><div class="fld" style="left:91.0px;top:124.4px;width:66.5px;height:9.4px"><span class="ft" style="left:1.8px">X&nbsp;&nbsp;&#8202;0.0</span></div><div class="fld" style="left:159px;top:124.4px;width:4px;height:9.400px"></div>
<span class="dt" style="left:10.0px;top:138.3px;color:#dcdcdc">Size To Content</span><svg class="abs" style="left:81.6px;top:140.1px" width="6" height="6" viewBox="0 0 6 6"><path d="M0.600 3.400L2.800 1.300L3.800 2.200L4.800 0.500L5.300 3.200L3.600 3.200L4.300 4.200L2.400 5.400Z" fill="#c4c4c4"/></svg><div class="cb" style="left:91.6px;top:139.6px;background:#b0b0b0"></div>
<span class="dt" style="left:10.0px;top:152.1px;color:#dcdcdc">ZOrder</span><svg class="abs" style="left:81.6px;top:153.9px" width="6" height="6" viewBox="0 0 6 6"><path d="M0.600 3.400L2.800 1.300L3.800 2.200L4.800 0.500L5.300 3.200L3.600 3.200L4.300 4.200L2.400 5.400Z" fill="#c4c4c4"/></svg><div class="fld" style="left:91.0px;top:152.6px;width:60.3px;height:9.4px"><span class="ft" style="left:2.6px">0</span></div>
<span class="dt" style="left:10.0px;top:183.9px;color:#dcdcdc">Tool Tip Text</span><div class="fld" style="left:91.0px;top:184.1px;width:74.0px;height:10px"><span class="ft" style="left:2.6px">Multiple Values</span></div>
<span class="dt" style="left:10.0px;top:197.8px;color:#dcdcdc">Is Enabled</span><svg class="abs" style="left:81.6px;top:199.6px" width="6" height="6" viewBox="0 0 6 6"><path d="M0.600 3.400L2.800 1.300L3.800 2.200L4.800 0.500L5.300 3.200L3.600 3.200L4.300 4.200L2.400 5.400Z" fill="#c4c4c4"/></svg><div class="cb" style="left:91.6px;top:199.1px;background:#f2f2f2"><svg style="position:absolute;left:0;top:0" width="8" height="8" viewBox="0 0 8 8"><path d="M1.700 4.100L3.300 5.800L6.300 1.800" fill="none" stroke="#333" stroke-width="1.100"/></svg></div>
<span class="dt" style="left:10.0px;top:212.3px;color:#dcdcdc">Visibility</span><svg class="abs" style="left:81.6px;top:214.1px" width="6" height="6" viewBox="0 0 6 6"><path d="M0.600 3.400L2.800 1.300L3.800 2.200L4.800 0.500L5.300 3.200L3.600 3.200L4.300 4.200L2.400 5.400Z" fill="#c4c4c4"/></svg><div class="combo" style="left:91.0px;top:212.2px;width:60px;height:10.500px"><span class="ft" style="left:3px;top:0.300px">Multiple Values</span><i class="dn big" style="left:52px;top:4.200px"></i></div>
<span class="dt" style="left:10.0px;top:226.7px;color:#dcdcdc">Render Opacity</span><svg class="abs" style="left:81.6px;top:228.5px" width="6" height="6" viewBox="0 0 6 6"><path d="M0.600 3.400L2.800 1.300L3.800 2.200L4.800 0.500L5.300 3.200L3.600 3.200L4.300 4.200L2.400 5.400Z" fill="#c4c4c4"/></svg><div class="fld" style="left:91.0px;top:227.2px;width:60.3px;height:9.4px"><span class="ft" style="left:2.6px">1.0</span></div>
<div class="abs" style="left:1.2px;top:239.8px;width:160px;height:7.4px;background:#464646"></div><svg class="abs" style="left:123.4px;top:241.2px" width="6" height="5" viewBox="0 0 6 5"><path d="M0.300 0.500H5.700L3 4.400Z" fill="#f0f0f0"/></svg>
<span class="dt" style="left:10.0px;top:266.4px;color:#dcdcdc;max-width:90.600px;overflow:hidden;transform:scaleX(0.865)">Override Accessible Default</span><div class="cb" style="left:91.6px;top:267.7px;background:#b0b0b0"></div>
<span class="dt" style="left:10.0px;top:280.2px;color:#7c7c7c;max-width:90.600px;overflow:hidden;transform:scaleX(0.865)">Can Children be Accessible</span><div class="cb" style="left:91.6px;top:281.5px;background:#8a8a8a"><svg style="position:absolute;left:0;top:0" width="8" height="8" viewBox="0 0 8 8"><path d="M1.700 4.100L3.300 5.800L6.300 1.800" fill="none" stroke="#5a5a5a" stroke-width="1.100"/></svg></div>
<span class="dt" style="left:10.0px;top:294.6px;color:#7c7c7c;transform:scaleX(0.866)">Accessible Behavior</span><div class="combo" style="left:91.6px;top:294.6px;width:56.400px;height:10.500px;background:#8c8c8c"><span class="ft" style="left:3px;top:0.300px;color:#3a3a3a">Not Accessible</span><i class="dn big" style="left:48.500px;top:4.400px;border-top-color:#2a2a2a"></i></div>
<div class="abs" style="left:1.2px;top:309.8px;width:160px;height:6.6px;background:#464646"></div><svg class="abs" style="left:123.4px;top:310.8px" width="6" height="5" viewBox="0 0 6 5"><path d="M0.300 0.500H5.700L3 4.400Z" fill="#f0f0f0"/></svg>
<svg class="abs" style="left:3.4px;top:337.3px" width="5" height="7" viewBox="0 0 5 7"><path d="M0.700 0.800L3.600 3.300L0.700 5.800Z" fill="none" stroke="#9a9a9a" stroke-width="0.700"/></svg><span class="dt" style="left:10.0px;top:335.4px;color:#dcdcdc">Transform</span><svg class="abs" style="left:81.6px;top:337.2px" width="6" height="6" viewBox="0 0 6 6"><path d="M0.600 3.400L2.800 1.300L3.800 2.200L4.800 0.500L5.300 3.200L3.600 3.200L4.300 4.200L2.400 5.400Z" fill="#c4c4c4"/></svg>
<svg class="abs" style="left:3.4px;top:351.8px" width="5" height="7" viewBox="0 0 5 7"><path d="M0.700 0.800L3.600 3.300L0.700 5.800Z" fill="none" stroke="#9a9a9a" stroke-width="0.700"/></svg><span class="dt" style="left:10.0px;top:349.9px;color:#dcdcdc">Pivot</span><svg class="abs" style="left:81.6px;top:351.7px" width="6" height="6" viewBox="0 0 6 6"><path d="M0.600 3.400L2.800 1.300L3.800 2.200L4.800 0.500L5.300 3.200L3.600 3.200L4.300 4.200L2.400 5.400Z" fill="#c4c4c4"/></svg><div class="fld" style="left:91.0px;top:350.4px;width:66.5px;height:9.4px"><span class="ft" style="left:1.8px">X&nbsp;&nbsp;&#8202;0.5</span></div><div class="fld" style="left:159px;top:350.4px;width:4px;height:9.400px"></div>
<span class="dt" style="left:10.0px;top:388.4px;color:#dcdcdc">Is Volatile</span><div class="cb" style="left:91.6px;top:389.7px;background:#b0b0b0"></div>
</div>

<!-- BOTTOM -->
<div class="tab" style="left:3.300px;top:464px;width:86.700px;height:13px"><svg class="abs" style="left:5px;top:3px" width="8" height="8" viewBox="0 0 8 8"><path d="M0.600 7.400L4.200 3.800" stroke="#d8d8d8" stroke-width="1.100"/><path d="M3.600 2.400L5.200 0.800L7.200 2.800L5.600 4.400Z" fill="#e8e8e8"/></svg><span class="lbl" style="left:17px;top:2.200px">Animations</span><span class="x" style="left:77px;top:1.600px">×</span></div>
<div class="panel" style="left:1.300px;top:476.600px;width:165.100px;height:89px"></div>
<div class="abs" style="left:4.800px;top:480.400px;width:45px;height:11.600px;background:#43a047;border-radius:1px"><span class="t b" style="left:1.800px;top:0.200px;font-size:10.500px;line-height:10px;color:#fff;text-shadow:0.500px 0.500px 0 #1a4a1a">+</span><span class="t b" style="left:9.900px;top:0.800px;font-size:7.600px;color:#fff;transform:scaleX(0.900);transform-origin:0 0;text-shadow:0.600px 0.600px 0 #1a3a1a">Animation</span></div>
<div class="search" style="left:51.200px;top:481px;width:110.800px;height:10.600px"><span>Search Animations</span></div>
<svg class="abs" style="left:152.600px;top:481.500px" width="9" height="9" viewBox="0 0 9 9"><circle cx="5.300" cy="3.600" r="2.900" fill="#e6e6e6" stroke="#111" stroke-width="1.300"/><path d="M3.100 5.900L0.900 8.100" stroke="#111" stroke-width="1.800" stroke-linecap="round"/></svg>
<div class="tab" style="left:171.700px;top:464.400px;width:87.300px;height:12.200px;background:#2c2c2c"><svg class="abs" style="left:3.500px;top:3px" width="10" height="8" viewBox="0 0 10 8"><rect x="0.300" y="0.800" width="8.800" height="5.600" fill="#c8d4e8"/><rect x="0.300" y="0.800" width="8.800" height="1.400" fill="#5a6a8a"/><rect x="0.300" y="5" width="8.800" height="1.400" fill="#5a6a8a"/><rect x="5.600" y="0" width="1.200" height="7.600" fill="#f0f0f0"/></svg><span class="lbl" style="left:15.500px;top:2.200px">Timeline</span><span class="x" style="left:77px;top:1.600px;color:#444">×</span></div>
<div class="tab" style="left:259px;top:464px;width:86.500px;height:13px"><svg class="abs" style="left:4px;top:2.600px" width="9" height="9" viewBox="0 0 9 9"><rect x="0.300" y="0.300" width="7.800" height="8" fill="#e8eef8"/><path d="M1.400 1.600L4.200 4.200L1.400 6.800" fill="none" stroke="#2c4ea0" stroke-width="1.500"/><rect x="4.400" y="6" width="3" height="1.300" fill="#2c4ea0"/></svg><span class="lbl" style="left:15.600px;top:2px;transform:scaleX(0.890)">Compiler Results</span><span class="x" style="left:76.500px;top:1.600px">×</span></div>
<div class="panel" style="left:169.500px;top:476.600px;width:836px;height:89px"></div>
<div class="abs" style="left:172.800px;top:479.800px;width:833px;height:66px;background:#222222"></div>
<div class="abs" style="left:178.400px;top:485.600px;width:2.400px;height:2.400px;border-radius:50%;background:#5aa2e4"></div><div class="t" style="left:188px;top:481.800px;font-family:'Liberation Mono',monospace;font-size:6.720px;color:#b4b4b4">[3501.40] Compile of WBP_EndGame successful! [in 399 ms] (/Game/FindMe-FindTheWord/Widgets/WBP_EndGame.WBP_EndGame)</div>
<div class="abs" style="left:0;top:0.500px;width:2px;height:565px;background:linear-gradient(90deg,#ffffff 0,#ffffff 1px,rgba(255,255,255,0.250) 1.100px,rgba(255,255,255,0) 1.800px)"></div>
</div>
</body>
</html>
